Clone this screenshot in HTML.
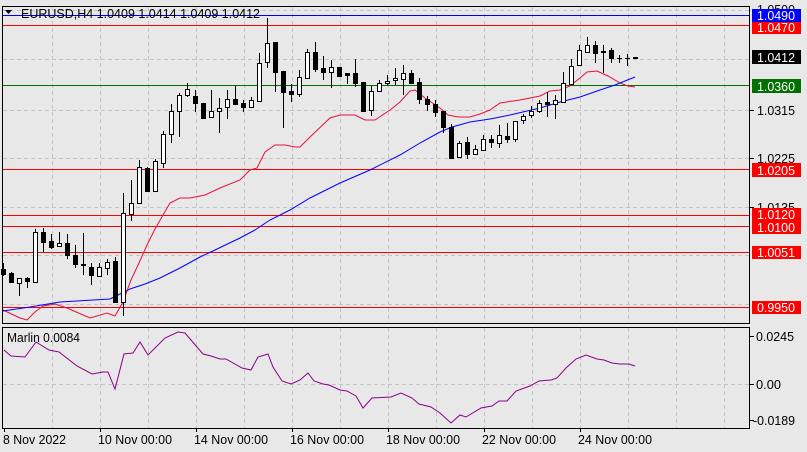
<!DOCTYPE html>
<html><head><meta charset="utf-8"><style>
html,body{margin:0;padding:0;background:#e8e8e8;}
svg{display:block;font-family:"Liberation Sans",sans-serif;}
</style></head><body>
<svg width="807" height="452" viewBox="0 0 807 452" xmlns="http://www.w3.org/2000/svg">
<rect width="807" height="452" fill="#e8e8e8"/>
<g stroke="#c4c4c4" stroke-dasharray="4,3" stroke-width="1">
<line x1="3" y1="10.5" x2="750" y2="10.5"/><line x1="3" y1="59.5" x2="750" y2="59.5"/><line x1="3" y1="110.5" x2="750" y2="110.5"/><line x1="3" y1="158.5" x2="750" y2="158.5"/><line x1="3" y1="207.5" x2="750" y2="207.5"/><line x1="3" y1="255.5" x2="750" y2="255.5"/><line x1="3" y1="304.5" x2="750" y2="304.5"/>
<line x1="3" y1="384.5" x2="750" y2="384.5"/>
<line x1="52.5" y1="7" x2="52.5" y2="323"/><line x1="100.5" y1="7" x2="100.5" y2="323"/><line x1="148.5" y1="7" x2="148.5" y2="323"/><line x1="196.5" y1="7" x2="196.5" y2="323"/><line x1="244.5" y1="7" x2="244.5" y2="323"/><line x1="292.5" y1="7" x2="292.5" y2="323"/><line x1="340.5" y1="7" x2="340.5" y2="323"/><line x1="388.5" y1="7" x2="388.5" y2="323"/><line x1="436.5" y1="7" x2="436.5" y2="323"/><line x1="484.5" y1="7" x2="484.5" y2="323"/><line x1="532.5" y1="7" x2="532.5" y2="323"/><line x1="580.5" y1="7" x2="580.5" y2="323"/><line x1="628.5" y1="7" x2="628.5" y2="323"/><line x1="676.5" y1="7" x2="676.5" y2="323"/><line x1="724.5" y1="7" x2="724.5" y2="323"/>
<g transform="translate(0,320)"><line x1="52.5" y1="8" x2="52.5" y2="108"/><line x1="100.5" y1="8" x2="100.5" y2="108"/><line x1="148.5" y1="8" x2="148.5" y2="108"/><line x1="196.5" y1="8" x2="196.5" y2="108"/><line x1="244.5" y1="8" x2="244.5" y2="108"/><line x1="292.5" y1="8" x2="292.5" y2="108"/><line x1="340.5" y1="8" x2="340.5" y2="108"/><line x1="388.5" y1="8" x2="388.5" y2="108"/><line x1="436.5" y1="8" x2="436.5" y2="108"/><line x1="484.5" y1="8" x2="484.5" y2="108"/><line x1="532.5" y1="8" x2="532.5" y2="108"/><line x1="580.5" y1="8" x2="580.5" y2="108"/><line x1="628.5" y1="8" x2="628.5" y2="108"/><line x1="676.5" y1="8" x2="676.5" y2="108"/><line x1="724.5" y1="8" x2="724.5" y2="108"/></g>
</g>
<line x1="2" y1="15.5" x2="750" y2="15.5" stroke="#0000ff"/>
<g stroke="#ff0000"><line x1="2" y1="25.5" x2="750" y2="25.5"/><line x1="2" y1="169.5" x2="750" y2="169.5"/><line x1="2" y1="215.5" x2="750" y2="215.5"/><line x1="2" y1="226.5" x2="750" y2="226.5"/><line x1="2" y1="252.5" x2="750" y2="252.5"/><line x1="2" y1="307.5" x2="750" y2="307.5"/></g>
<line x1="2" y1="85.5" x2="750" y2="85.5" stroke="#007000"/>
<polyline fill="none" stroke="#e8103c" stroke-width="1" points="3,310 20,318 27,320 35,312 43,306 55,304 67,308 90,318 107,313 115,316 123,302 131,280 139,263 147,245 155,229 163,215 170,203 180,198 190,198 205,195 220,188 240,180 250,170 257,168 265,152 275,145 285,145 295,147 300,147 310,137 330,118 340,115 355,115 365,120 375,120 390,110 400,102 410,91 415,90 425,98 440,108 448,115 458,117 470,117 480,114 490,110 500,103 520,100 540,96 550,91 560,90 570,86 580,78 587,72 597,71 608,76 620,83 628,86 635,87"/>
<polyline fill="none" stroke="#0000ff" stroke-width="1" points="3,311 30,307 60,302 110,299 120,294 130,289 145,284 160,278 180,268 200,257 215,250 240,238 255,230 270,220 290,210 310,198 340,183 370,170 400,155 420,143 440,132 452,127 470,122 490,119 510,115 540,108 560,102 580,97 600,90 615,85 635,77"/>
<g stroke="#000" stroke-width="1">
<line x1="3.5" y1="263" x2="3.5" y2="276"/><rect x="1.5" y="269.5" width="4" height="5" fill="#000"/>
<line x1="11.5" y1="272" x2="11.5" y2="283"/><rect x="9.5" y="273.5" width="4" height="9" fill="#000"/>
<line x1="19.5" y1="278" x2="19.5" y2="296"/><rect x="17.5" y="278.5" width="4" height="5" fill="#fff"/>
<line x1="27.5" y1="277" x2="27.5" y2="288"/><rect x="25.5" y="278.5" width="4" height="3" fill="#000"/>
<line x1="35.5" y1="229" x2="35.5" y2="282"/><rect x="33.5" y="232.5" width="4" height="50" fill="#fff"/>
<line x1="43.5" y1="228" x2="43.5" y2="252"/><rect x="41.5" y="232.5" width="4" height="10" fill="#000"/>
<line x1="51.5" y1="234" x2="51.5" y2="249"/><rect x="49.5" y="241.5" width="4" height="6" fill="#000"/>
<line x1="59.5" y1="232" x2="59.5" y2="246"/><rect x="57.5" y="243.5" width="4" height="3" fill="#fff"/>
<line x1="67.5" y1="234" x2="67.5" y2="259"/><rect x="65.5" y="243.5" width="4" height="12" fill="#000"/>
<line x1="75.5" y1="245" x2="75.5" y2="268"/><rect x="73.5" y="255.5" width="4" height="9" fill="#000"/>
<line x1="83.5" y1="233" x2="83.5" y2="275"/><rect x="81.5" y="264.5" width="4" height="1" fill="#000"/>
<line x1="91.5" y1="263" x2="91.5" y2="285"/><rect x="89.5" y="267.5" width="4" height="8" fill="#000"/>
<line x1="99.5" y1="263" x2="99.5" y2="276"/><rect x="97.5" y="267.5" width="4" height="9" fill="#fff"/>
<line x1="107.5" y1="259" x2="107.5" y2="275"/><rect x="105.5" y="262.5" width="4" height="6" fill="#fff"/>
<line x1="115.5" y1="257" x2="115.5" y2="303"/><rect x="113.5" y="261.5" width="4" height="41" fill="#000"/>
<line x1="123.5" y1="193" x2="123.5" y2="316"/><rect x="121.5" y="213.5" width="4" height="89" fill="#fff"/>
<line x1="131.5" y1="180" x2="131.5" y2="221"/><rect x="129.5" y="203.5" width="4" height="11" fill="#fff"/>
<line x1="139.5" y1="160" x2="139.5" y2="203"/><rect x="137.5" y="167.5" width="4" height="36" fill="#fff"/>
<line x1="147.5" y1="167" x2="147.5" y2="191"/><rect x="145.5" y="168.5" width="4" height="23" fill="#000"/>
<line x1="155.5" y1="159" x2="155.5" y2="191"/><rect x="153.5" y="161.5" width="4" height="30" fill="#fff"/>
<line x1="163.5" y1="131" x2="163.5" y2="168"/><rect x="161.5" y="134.5" width="4" height="29" fill="#fff"/>
<line x1="171.5" y1="104" x2="171.5" y2="143"/><rect x="169.5" y="111.5" width="4" height="23" fill="#fff"/>
<line x1="179.5" y1="93" x2="179.5" y2="137"/><rect x="177.5" y="95.5" width="4" height="16" fill="#fff"/>
<line x1="187.5" y1="83" x2="187.5" y2="97"/><rect x="185.5" y="89.5" width="4" height="6" fill="#fff"/>
<line x1="195.5" y1="90" x2="195.5" y2="112"/><rect x="193.5" y="96.5" width="4" height="7" fill="#000"/>
<line x1="203.5" y1="103" x2="203.5" y2="119"/><rect x="201.5" y="103.5" width="4" height="15" fill="#000"/>
<line x1="211.5" y1="90" x2="211.5" y2="117"/><rect x="209.5" y="111.5" width="4" height="6" fill="#fff"/>
<line x1="219.5" y1="98" x2="219.5" y2="133"/><rect x="217.5" y="108.5" width="4" height="3" fill="#fff"/>
<line x1="227.5" y1="90" x2="227.5" y2="119"/><rect x="225.5" y="99.5" width="4" height="8" fill="#fff"/>
<line x1="235.5" y1="86" x2="235.5" y2="104"/><rect x="233.5" y="99.5" width="4" height="5" fill="#000"/>
<line x1="243.5" y1="100" x2="243.5" y2="112"/><rect x="241.5" y="103.5" width="4" height="4" fill="#000"/>
<line x1="251.5" y1="97" x2="251.5" y2="108"/><rect x="249.5" y="100.5" width="4" height="7" fill="#fff"/>
<line x1="259.5" y1="53" x2="259.5" y2="102"/><rect x="257.5" y="63.5" width="4" height="38" fill="#fff"/>
<line x1="267.5" y1="18" x2="267.5" y2="68"/><rect x="265.5" y="43.5" width="4" height="19" fill="#fff"/>
<line x1="275.5" y1="42" x2="275.5" y2="92"/><rect x="273.5" y="42.5" width="4" height="30" fill="#000"/>
<line x1="283.5" y1="71" x2="283.5" y2="128"/><rect x="281.5" y="71.5" width="4" height="21" fill="#000"/>
<line x1="291.5" y1="84" x2="291.5" y2="102"/><rect x="289.5" y="91.5" width="4" height="3" fill="#000"/>
<line x1="299.5" y1="70" x2="299.5" y2="97"/><rect x="297.5" y="77.5" width="4" height="17" fill="#fff"/>
<line x1="307.5" y1="49" x2="307.5" y2="78"/><rect x="305.5" y="52.5" width="4" height="26" fill="#fff"/>
<line x1="315.5" y1="42" x2="315.5" y2="72"/><rect x="313.5" y="52.5" width="4" height="17" fill="#000"/>
<line x1="323.5" y1="56" x2="323.5" y2="80"/><rect x="321.5" y="68.5" width="4" height="4" fill="#000"/>
<line x1="331.5" y1="60" x2="331.5" y2="88"/><rect x="329.5" y="67.5" width="4" height="5" fill="#fff"/>
<line x1="339.5" y1="67" x2="339.5" y2="77"/><rect x="337.5" y="67.5" width="4" height="9" fill="#000"/>
<line x1="347.5" y1="73" x2="347.5" y2="84"/><rect x="345.5" y="73.5" width="4" height="2" fill="#000"/>
<line x1="355.5" y1="59" x2="355.5" y2="87"/><rect x="353.5" y="73.5" width="4" height="10" fill="#000"/>
<line x1="363.5" y1="82" x2="363.5" y2="111"/><rect x="361.5" y="82.5" width="4" height="29" fill="#000"/>
<line x1="371.5" y1="86" x2="371.5" y2="116"/><rect x="369.5" y="91.5" width="4" height="19" fill="#fff"/>
<line x1="379.5" y1="80" x2="379.5" y2="91"/><rect x="377.5" y="83.5" width="4" height="8" fill="#fff"/>
<line x1="387.5" y1="75" x2="387.5" y2="85"/><rect x="385.5" y="81.5" width="4" height="2" fill="#fff"/>
<line x1="395.5" y1="68" x2="395.5" y2="85"/><rect x="393.5" y="78.5" width="4" height="2" fill="#fff"/>
<line x1="403.5" y1="65" x2="403.5" y2="95"/><rect x="401.5" y="73.5" width="4" height="6" fill="#fff"/>
<line x1="411.5" y1="70" x2="411.5" y2="83"/><rect x="409.5" y="73.5" width="4" height="10" fill="#000"/>
<line x1="419.5" y1="78" x2="419.5" y2="104"/><rect x="417.5" y="82.5" width="4" height="17" fill="#000"/>
<line x1="427.5" y1="96" x2="427.5" y2="111"/><rect x="425.5" y="99.5" width="4" height="5" fill="#000"/>
<line x1="435.5" y1="100" x2="435.5" y2="117"/><rect x="433.5" y="104.5" width="4" height="8" fill="#000"/>
<line x1="443.5" y1="111" x2="443.5" y2="133"/><rect x="441.5" y="111.5" width="4" height="16" fill="#000"/>
<line x1="451.5" y1="124" x2="451.5" y2="158"/><rect x="449.5" y="127.5" width="4" height="31" fill="#000"/>
<line x1="459.5" y1="141" x2="459.5" y2="158"/><rect x="457.5" y="143.5" width="4" height="14" fill="#fff"/>
<line x1="467.5" y1="137" x2="467.5" y2="159"/><rect x="465.5" y="142.5" width="4" height="12" fill="#000"/>
<line x1="475.5" y1="145" x2="475.5" y2="155"/><rect x="473.5" y="149.5" width="4" height="5" fill="#fff"/>
<line x1="483.5" y1="135" x2="483.5" y2="150"/><rect x="481.5" y="139.5" width="4" height="11" fill="#fff"/>
<line x1="491.5" y1="135" x2="491.5" y2="148"/><rect x="489.5" y="139.5" width="4" height="3" fill="#000"/>
<line x1="499.5" y1="125" x2="499.5" y2="148"/><rect x="497.5" y="135.5" width="4" height="8" fill="#fff"/>
<line x1="507.5" y1="123" x2="507.5" y2="143"/><rect x="505.5" y="136.5" width="4" height="3" fill="#000"/>
<line x1="515.5" y1="121" x2="515.5" y2="142"/><rect x="513.5" y="121.5" width="4" height="18" fill="#fff"/>
<line x1="523.5" y1="114" x2="523.5" y2="124"/><rect x="521.5" y="116.5" width="4" height="4" fill="#fff"/>
<line x1="531.5" y1="106" x2="531.5" y2="118"/><rect x="529.5" y="111.5" width="4" height="4" fill="#fff"/>
<line x1="539.5" y1="100" x2="539.5" y2="113"/><rect x="537.5" y="103.5" width="4" height="8" fill="#fff"/>
<line x1="547.5" y1="92" x2="547.5" y2="117"/><rect x="545.5" y="102.5" width="4" height="2" fill="#000"/>
<line x1="555.5" y1="95" x2="555.5" y2="119"/><rect x="553.5" y="100.5" width="4" height="4" fill="#fff"/>
<line x1="563.5" y1="72" x2="563.5" y2="102"/><rect x="561.5" y="83.5" width="4" height="19" fill="#fff"/>
<line x1="571.5" y1="59" x2="571.5" y2="84"/><rect x="569.5" y="66.5" width="4" height="18" fill="#fff"/>
<line x1="579.5" y1="45" x2="579.5" y2="65"/><rect x="577.5" y="50.5" width="4" height="15" fill="#fff"/>
<line x1="587.5" y1="37" x2="587.5" y2="53"/><rect x="585.5" y="45.5" width="4" height="7" fill="#fff"/>
<line x1="595.5" y1="41" x2="595.5" y2="63"/><rect x="593.5" y="45.5" width="4" height="8" fill="#000"/>
<line x1="603.5" y1="45" x2="603.5" y2="73"/><rect x="601.5" y="51.5" width="4" height="1" fill="#000"/>
<line x1="611.5" y1="48" x2="611.5" y2="63"/><rect x="609.5" y="50.5" width="4" height="8" fill="#000"/>
<line x1="619.5" y1="55" x2="619.5" y2="63"/><line x1="617" y1="58.5" x2="622" y2="58.5"/>
<line x1="627.5" y1="54" x2="627.5" y2="66"/><line x1="625" y1="58.5" x2="630" y2="58.5"/>
<rect x="633.5" y="57.5" width="4" height="1" fill="#000"/>
</g>
<g fill="none" stroke="#000" stroke-width="1">
<rect x="2.5" y="6.5" width="747" height="317"/>
<rect x="2.5" y="327.5" width="747" height="101"/>
</g>
<polyline fill="none" stroke="#8b008b" stroke-width="1" points="4,350 11,356 25,357 36,342 49,350 59,352 77,366 92,374 103,372 108,372 115,389 124,354 133,353 140,342 148,355 165,338 178,332 185,333 203,354 211,356 220,359 226,359 242,368 251,370 258,357 268,354 273,367 282,381 291,384 300,380 308,373 314,381 323,384 329,385 340,390 347,391 356,396 363,408 372,398 391,397 401,393 412,398 419,404 431,407 440,413 451,423 460,415 466,417 481,408 492,406 499,401 507,401 516,391 530,386 539,381 551,380 557,378 566,368 576,359 586,355 597,359 604,360 612,363 620,364 629,364 635,366"/>
<path d="M5 10 L12 10 L8.5 14 Z" fill="#000"/>
<g font-size="12.5" fill="#000">
<text x="21" y="18" textLength="239" lengthAdjust="spacingAndGlyphs">EURUSD,H4  1.0409 1.0414 1.0409 1.0412</text>
<text x="7" y="342" textLength="73" lengthAdjust="spacingAndGlyphs">Marlin 0.0084</text>
</g>
<g stroke="#000"><line x1="750" y1="110.5" x2="754" y2="110.5"/><line x1="750" y1="158.5" x2="754" y2="158.5"/><line x1="750" y1="207.5" x2="754" y2="207.5"/><line x1="750" y1="336.5" x2="754" y2="336.5"/><line x1="750" y1="384.5" x2="754" y2="384.5"/><line x1="750" y1="420.5" x2="754" y2="420.5"/></g>
<g font-size="12.5" fill="#000">
<text x="757" y="14" textLength="38" lengthAdjust="spacingAndGlyphs">1.0500</text>
<text x="757" y="115" textLength="38" lengthAdjust="spacingAndGlyphs">1.0315</text>
<text x="757" y="163" textLength="38" lengthAdjust="spacingAndGlyphs">1.0225</text>
<text x="757" y="212" textLength="38" lengthAdjust="spacingAndGlyphs">1.0135</text>
<text x="756" y="341" textLength="38" lengthAdjust="spacingAndGlyphs">0.0245</text>
<text x="756" y="389" textLength="25" lengthAdjust="spacingAndGlyphs">0.00</text>
<text x="753" y="425" textLength="42" lengthAdjust="spacingAndGlyphs">-0.0189</text>
</g>
<rect x="752" y="9" width="49" height="13" fill="#0000ff"/>
<rect x="752" y="22" width="49" height="12" fill="#ff0000"/>
<rect x="752" y="50" width="49" height="14" fill="#000"/>
<rect x="752" y="79" width="49" height="14" fill="#007000"/>
<rect x="752" y="163" width="49" height="14" fill="#ff0000"/>
<rect x="752" y="208" width="49" height="13" fill="#ff0000"/>
<rect x="752" y="221" width="49" height="13" fill="#ff0000"/>
<rect x="752" y="246" width="49" height="13" fill="#ff0000"/>
<rect x="752" y="301" width="49" height="13" fill="#ff0000"/>
<g font-size="12.5" fill="#fff">
<text x="757" y="20" textLength="38" lengthAdjust="spacingAndGlyphs">1.0490</text>
<text x="757" y="32" textLength="38" lengthAdjust="spacingAndGlyphs">1.0470</text>
<text x="757" y="62" textLength="38" lengthAdjust="spacingAndGlyphs">1.0412</text>
<text x="757" y="91" textLength="38" lengthAdjust="spacingAndGlyphs">1.0360</text>
<text x="757" y="175" textLength="38" lengthAdjust="spacingAndGlyphs">1.0205</text>
<text x="757" y="219" textLength="38" lengthAdjust="spacingAndGlyphs">1.0120</text>
<text x="757" y="232" textLength="38" lengthAdjust="spacingAndGlyphs">1.0100</text>
<text x="757" y="257" textLength="38" lengthAdjust="spacingAndGlyphs">1.0051</text>
<text x="757" y="312" textLength="38" lengthAdjust="spacingAndGlyphs">0.9950</text>
</g>
<g stroke="#000"><line x1="4.5" y1="428" x2="4.5" y2="432"/><line x1="100.5" y1="428" x2="100.5" y2="432"/><line x1="196.5" y1="428" x2="196.5" y2="432"/><line x1="292.5" y1="428" x2="292.5" y2="432"/><line x1="388.5" y1="428" x2="388.5" y2="432"/><line x1="484.5" y1="428" x2="484.5" y2="432"/><line x1="580.5" y1="428" x2="580.5" y2="432"/></g>
<g font-size="12.5" fill="#000">
<text x="3" y="444" textLength="63" lengthAdjust="spacingAndGlyphs">8 Nov 2022</text>
<text x="98" y="444" textLength="74" lengthAdjust="spacingAndGlyphs">10 Nov 00:00</text>
<text x="194" y="444" textLength="74" lengthAdjust="spacingAndGlyphs">14 Nov 00:00</text>
<text x="290" y="444" textLength="74" lengthAdjust="spacingAndGlyphs">16 Nov 00:00</text>
<text x="386" y="444" textLength="74" lengthAdjust="spacingAndGlyphs">18 Nov 00:00</text>
<text x="482" y="444" textLength="74" lengthAdjust="spacingAndGlyphs">22 Nov 00:00</text>
<text x="578" y="444" textLength="74" lengthAdjust="spacingAndGlyphs">24 Nov 00:00</text>
</g>
</svg>
</body></html>
